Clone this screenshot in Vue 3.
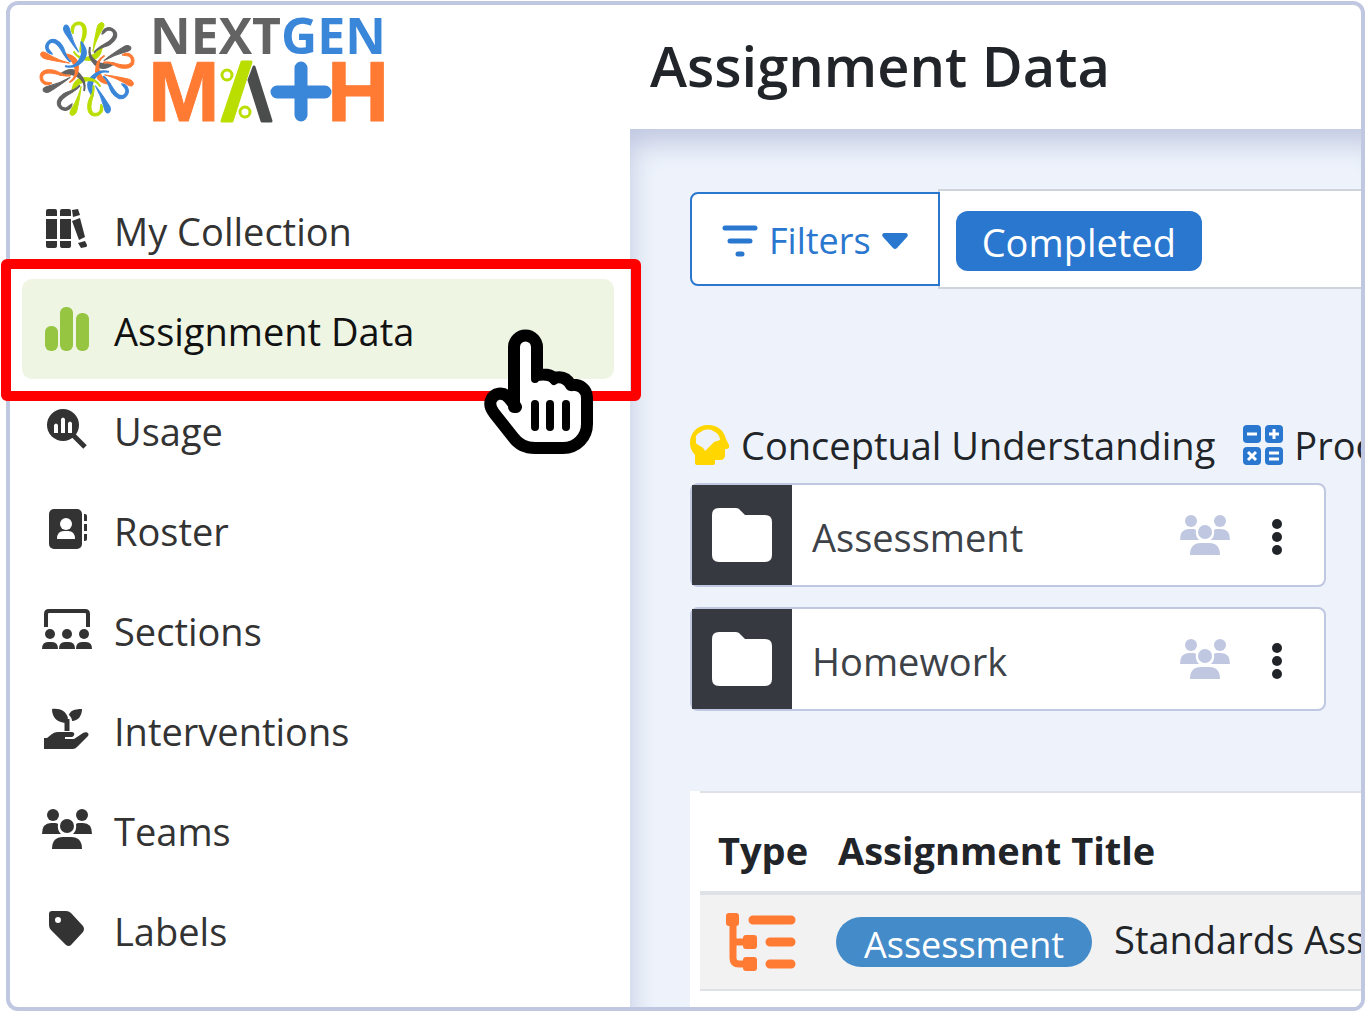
<template>
  <div class="frame">
    <aside class="sidebar">
      <a class="logo" href="#" aria-label="NextGen Math">
        <svg width="352" height="112" viewBox="0 0 352 112" aria-hidden="true">
          <g transform="translate(51 54)">
            <g
              v-for="arm in arms"
              :key="arm.angle"
              :transform="`rotate(${arm.angle})`"
              :fill="arm.color"
              :stroke="arm.color"
              stroke-linecap="round"
              stroke-linejoin="round"
            >
              <path d="M-13 -17C-8 -9 6 -8 15 -23C14 -15 10 -9 2 -9C-5 -9 -10 -12 -13 -17Z" stroke-width="2" />
              <path d="M-7 -17C-8 -24 -4 -31 -4 -38C-4 -44 -8 -46 -12 -43C-14 -41 -13 -37 -14 -35C-18 -40 -15 -47 -8 -47C-1 -47 0 -40 -1 -34C-2 -28 -7 -24 -6 -17Z" stroke-width="1" />
              <path d="M6 -18C7 -28 9 -36 10 -41C11 -47 17 -48 17 -44C17 -40 11 -36 6 -18Z" stroke-width="1" />
            </g>
          </g>
          <text class="logo-next" x="114" y="39">NEXT<tspan fill="#3a86d9">GEN</tspan></text>
          <g class="logo-math">
            <text x="112" y="106">M</text>
            <text x="291" y="106">H</text>
          </g>
          <path d="M206 47h9l-19 59h-10z" fill="#bade00" stroke="#bade00" stroke-width="3" stroke-linejoin="round" />
          <g fill="none" stroke="#bade00" stroke-width="3">
            <circle cx="191" cy="60" r="5" />
            <circle cx="209" cy="97" r="5" />
          </g>
          <path d="M218 52L213 65L226 106L235 106Z" fill="#4b4d4d" stroke="#4b4d4d" stroke-width="3" stroke-linejoin="round" />
          <path d="M265 53v47M241 77h48" stroke="#3a86d9" stroke-width="13" stroke-linecap="round" />
        </svg>
      </a>

      <nav class="nav">
        <a
          v-for="item in items"
          :key="item.label"
          href="#"
          class="nav-item"
          :class="{ active: item.active }"
        >
          <svg class="nav-icon" viewBox="0 0 50 50" aria-hidden="true">
            <g v-if="item.icon === 'books'">
              <path d="M6 5h7q2 0 2 2v5H4V7q0-2 2-2zM4 15h11v20H4zM4 37h11v5q0 2-2 2H6q-2 0-2-2z" />
              <path d="M20 5h7q2 0 2 2v5H18V7q0-2 2-2zM18 15h11v20H18zM18 37h11v5q0 2-2 2h-7q-2 0-2-2z" />
              <path d="M30 6l6-1 2 6-7 2zM30 17l8-3 5 19-6 3zM36 39l7-2 2 4q0 2-1 2l-5 1z" />
            </g>
            <g v-else-if="item.icon === 'bars'">
              <rect x="3" y="22" width="13" height="25" rx="6" />
              <rect x="18" y="3" width="13" height="44" rx="6" />
              <rect x="34" y="9" width="13" height="38" rx="6" />
            </g>
            <g v-else-if="item.icon === 'usage'">
              <circle cx="21" cy="21" r="16" />
              <path d="M31 31l12 12" stroke="currentColor" stroke-width="5" />
              <path d="M12 21q2-3 4 0v8h-4zM19 15q2-3 4 0v14h-4zM26 19q2-3 4 0v10h-4z" fill="#fff" />
            </g>
            <g v-else-if="item.icon === 'roster'">
              <rect x="7" y="5" width="33" height="40" rx="5" />
              <path d="M42 10h1q2 0 2 2v5h-3zM42 20h3v7h-3zM42 30h3v5q0 2-2 2h-1z" />
              <circle cx="24" cy="20" r="6" fill="#fff" />
              <path d="M15 35q0-8 7-8h4q7 0 7 8z" fill="#fff" />
            </g>
            <g v-else-if="item.icon === 'sections'">
              <path d="M4 23V10q0-3 3-3h36q3 0 3 3v13" fill="none" stroke="currentColor" stroke-width="4" />
              <g v-for="x in [8, 25, 42]" :key="x" :transform="`translate(${x} 0)`">
                <circle cx="0" cy="30" r="5" />
                <path d="M-8 45q0-7 6-7h4q6 0 6 7z" />
              </g>
            </g>
            <g v-else-if="item.icon === 'plant'">
              <path d="M10 5c8-1 14 2 16 9c-1 2-1 3-1 5c-9 0-15-5-15-14zM27 11c1-4 5-6 13-6c0 7-4 12-10 12c0-2-1-4-3-6z" />
              <path d="M25 15v12" stroke="currentColor" stroke-width="5" />
              <path d="M2 34h3l5-4c3-2 5-2 8-2h12c3 0 3 4 0 5h-7v2h9l9-6c3-2 7 0 5 3L35 43c-2 2-4 2-6 2H2z" />
            </g>
            <use v-else-if="item.icon === 'team'" href="#team" />
            <g v-else>
              <path fill-rule="evenodd" d="M10 7h14q3 0 5 2l12 13q2 3 0 6L29 41q-2 2-5 0L9 26q-2-2-2-5V10q0-3 3-3zM16 13a3 3 0 1 0 0 6a3 3 0 1 0 0-6z" />
            </g>
          </svg>
          <span>{{ item.label }}</span>
          <span v-if="item.active" class="highlight"></span>
          <svg v-if="item.active" class="pointer" viewBox="0 0 112 128" aria-hidden="true">
            <path
              d="M32 79L25 70C19 63 10 65 7 72C5 77 7 81 10 85L29 109C34 116 42 120 51 120H79C93 120 103 109 103 96V70C103 61 96 56 87 57C83 50 77 48 70 50C66 46 60 46 53 47V19A11 11 0 0 0 30 19V79"
              fill="#fff" stroke="#000" stroke-width="12" stroke-linecap="round" stroke-linejoin="round"
            />
            <path d="M51 47v4M68 50l2 3M86 56l2 3" stroke="#000" stroke-width="8" stroke-linecap="round" />
            <path d="M51 76v23M66 76v23M82 76v23" stroke="#000" stroke-width="8" stroke-linecap="round" />
          </svg>
        </a>
      </nav>
    </aside>

    <div class="main">
      <header class="header">
        <h1>Assignment Data</h1>
      </header>

      <main class="content">
        <div class="filter-row">
          <button type="button" class="filter-btn">
            <svg width="36" height="34" viewBox="0 0 36 34" aria-hidden="true">
              <path d="M3 4h30M8 17h20M16 30h4" stroke="currentColor" stroke-width="5" stroke-linecap="round" />
            </svg>
            <span>Filters</span>
            <svg width="26" height="18" viewBox="0 0 26 18" aria-hidden="true">
              <path d="M2 1h22q3 1 1 4L15 16q-2 2-4 0L1 5q-2-3 1-4z" fill="currentColor" />
            </svg>
          </button>
          <div class="filter-box">
            <span class="chip">Completed</span>
          </div>
        </div>

        <div class="legend">
          <span class="legend-item">
            <svg width="40" height="40" viewBox="0 0 40 40" aria-hidden="true">
              <path fill="#ffd600" d="M18 0C28 0 34 6 36 14L39 20Q40 23 37 24H35V30Q35 35 30 35H25V38Q25 40 23 40H7Q5 40 5 38V30C2 27 0 23 0 18C0 8 7 0 18 0Z" />
              <path fill="#eef3fb" d="M6 14C5 11 8 8 11 7C14 4 20 4 23 6C26 7 30 10 30 15L24 17L15 26C13 21 8 21 6 18Z" />
            </svg>
            Conceptual Understanding
          </span>
          <span class="legend-item">
            <svg width="40" height="40" viewBox="0 0 40 40" aria-hidden="true">
              <g fill="#2a77cf">
                <rect width="18" height="18" rx="4" />
                <rect x="22" width="18" height="18" rx="4" />
                <rect y="22" width="18" height="18" rx="4" />
                <rect x="22" y="22" width="18" height="18" rx="4" />
              </g>
              <path d="M4 9h10M26 9h10M31 4v10M5 27l8 8M13 27l-8 8M26 28h10M26 34h10" stroke="#fff" stroke-width="3" />
            </svg>
            Procedural
          </span>
        </div>

        <div class="folders">
          <div v-for="folder in folders" :key="folder" class="folder">
            <span class="folder-tile">
              <svg width="60" height="56" viewBox="0 0 60 56" aria-hidden="true">
                <path d="M7 1H24Q27 1 29 4L33 8H53Q60 8 60 15V48Q60 55 53 55H7Q0 55 0 48V8Q0 1 7 1Z" fill="#fff" />
              </svg>
            </span>
            <span class="folder-name">{{ folder }}</span>
            <svg class="folder-team" viewBox="0 0 50 50" aria-hidden="true">
              <use href="#team" />
            </svg>
            <button type="button" class="more" :aria-label="`${folder} options`">
              <svg width="10" height="36" viewBox="0 0 10 36" aria-hidden="true">
                <circle cx="5" cy="5" r="5" />
                <circle cx="5" cy="18" r="5" />
                <circle cx="5" cy="31" r="5" />
              </svg>
            </button>
          </div>
        </div>

        <div class="table-wrap">
          <table>
            <thead>
              <tr>
                <th class="col-type">Type</th>
                <th>Assignment Title</th>
              </tr>
            </thead>
            <tbody>
              <tr>
                <td class="col-type">
                  <svg class="tree" viewBox="0 0 70 58" aria-label="Standards">
                    <g fill="#ff7a33">
                      <rect width="13" height="13" rx="3" />
                      <rect x="17" y="22" width="14" height="14" rx="3" />
                      <rect x="17" y="44" width="14" height="14" rx="3" />
                    </g>
                    <path d="M7 8V45Q7 51 13 51H22M7 29H22" fill="none" stroke="#ff7a33" stroke-width="7" />
                    <path d="M27 7H65M44 29H65M44 51H65" stroke="#ff7a33" stroke-width="9" stroke-linecap="round" />
                  </svg>
                </td>
                <td>
                  <div class="title-cell">
                    <span class="badge">Assessment</span>
                    <span>Standards Assessment</span>
                  </div>
                </td>
              </tr>
            </tbody>
          </table>
        </div>
      </main>
    </div>

    <svg class="symbols" aria-hidden="true">
      <symbol id="team" viewBox="0 0 50 50">
        <circle cx="11" cy="11" r="6" />
        <circle cx="40" cy="11" r="6" />
        <circle cx="25" cy="22" r="7" />
        <path d="M0 30q0-11 9-11h4q2 0 3 1q-1 6 3 10zM50 30q0-11-9-11h-4q-2 0-3 1q1 6-3 10zM10 45q0-12 11-12h8q11 0 11 12z" />
      </symbol>
    </svg>
  </div>
</template>

<script setup>
const palette = ['#bade00', '#636363', '#ff7a33', '#3a86d9']

const arms = Array.from({ length: 8 }, (_, i) => ({
  angle: i * 45,
  color: palette[i % 4]
}))

const items = [
  { label: 'My Collection', icon: 'books' },
  { label: 'Assignment Data', icon: 'bars', active: true },
  { label: 'Usage', icon: 'usage' },
  { label: 'Roster', icon: 'roster' },
  { label: 'Sections', icon: 'sections' },
  { label: 'Interventions', icon: 'plant' },
  { label: 'Teams', icon: 'team' },
  { label: 'Labels', icon: 'tag' }
]

const folders = ['Assessment', 'Homework']
</script>

<style>
body {
  margin: 0;
  background: #fff;
}
</style>

<style scoped>
.frame {
  display: flex;
  box-sizing: border-box;
  min-height: calc(100vh - 2px);
  margin: 1px 1px 0 6px;
  border: 4px solid #bfc7e1;
  border-radius: 12px;
  background: #fff;
  font-family: 'Open Sans', 'Noto Sans', sans-serif;
  font-size: 38px;
  line-height: 50px;
  color: #212529;
}

.frame * {
  box-sizing: border-box;
}

.sidebar {
  position: relative;
  z-index: 2;
  flex: 0 0 620px;
  padding: 10px 16px 16px 12px;
}

.logo {
  display: block;
  height: 164px;
  padding-left: 14px;
}

.logo-next {
  font-size: 50px;
  font-weight: 700;
  fill: #636363;
}

.logo-math {
  font-family: 'Liberation Sans', sans-serif;
  font-size: 86px;
  font-weight: 700;
  fill: #ff7a33;
  stroke: #ff7a33;
  stroke-width: 1px;
  stroke-linejoin: round;
}

.nav-item {
  position: relative;
  display: flex;
  align-items: center;
  gap: 22px;
  height: 100px;
  padding: 4px 20px 0;
  border-radius: 10px;
  color: #333;
  text-decoration: none;
}

.nav-item.active {
  z-index: 1;
  background: #eef5e3;
  color: #111;
}

.nav-icon {
  width: 50px;
  height: 50px;
  margin-bottom: 4px;
  fill: currentColor;
}

.active .nav-icon {
  color: #95c541;
}

.highlight {
  position: absolute;
  inset: -20px -27px -22px -21px;
  border: 10px solid #f00;
  border-radius: 6px;
}

.pointer {
  position: absolute;
  top: 49px;
  right: 18px;
  width: 112px;
  height: 128px;
}

.main {
  display: flex;
  flex: 1;
  flex-direction: column;
  min-width: 0;
  overflow: hidden;
  border-radius: 0 8px 8px 0;
}

.header {
  height: 124px;
  padding: 20px;
}

h1 {
  margin: 0;
  font-size: 56px;
  font-weight: 600;
  line-height: 80px;
  white-space: nowrap;
}

.content {
  flex: 1;
  padding: 60px 0 0 60px;
  background: #eef3fb;
  box-shadow: inset 12px 26px 28px -12px #bfc7e1;
}

.filter-row {
  display: flex;
  align-items: center;
}

.filter-btn {
  position: relative;
  z-index: 1;
  display: flex;
  align-items: center;
  gap: 11px;
  height: 94px;
  margin-right: -2px;
  padding: 4px 30px 0;
  border: 2px solid #2a77cf;
  border-radius: 8px 0 0 8px;
  background: #fff;
  color: #2a77cf;
  font: inherit;
  font-size: 36px;
}

.filter-box {
  flex: 1;
  height: 100px;
  padding: 20px 16px;
  border: 2px solid #ced4da;
  border-right: 0;
  background: #fff;
}

.chip {
  display: inline-block;
  height: 60px;
  padding: 0 26px;
  border-radius: 12px;
  background: #2a77cf;
  color: #fff;
  line-height: 62px;
}

.legend {
  display: flex;
  gap: 28px;
  margin-top: 131px;
  white-space: nowrap;
}

.legend-item {
  display: flex;
  align-items: center;
  gap: 11px;
}

.folders {
  display: grid;
  gap: 20px;
  margin: 13px 35px 80px 0;
}

.folder {
  display: flex;
  align-items: center;
  height: 104px;
  padding-right: 32px;
  border: 2px solid #bfc7e1;
  border-radius: 8px;
  background: #fff;
}

.folder-tile {
  display: flex;
  align-items: center;
  justify-content: center;
  width: 100px;
  height: 100px;
  background: #363940;
}

.folder-name {
  flex: 1;
  padding: 4px 20px 0;
  color: #3d4248;
}

.folder-team {
  width: 50px;
  height: 50px;
  fill: #bfc7e1;
}

.more {
  margin-left: 32px;
  padding: 4px 10px 0;
  border: 0;
  background: none;
  line-height: 0;
  fill: #212529;
}

.table-wrap {
  padding: 0 0 16px 10px;
  background: #fff;
}

table {
  width: 100%;
  border-collapse: collapse;
  table-layout: fixed;
  white-space: nowrap;
}

th {
  height: 101px;
  padding: 16px 0 0 2px;
  border-top: 2px solid #dee2e6;
  border-bottom: 4px solid #dee2e6;
  font-weight: 700;
  text-align: left;
}

td {
  height: 97px;
  padding: 0;
  border-bottom: 2px solid #dee2e6;
  background: #f2f2f2;
}

.col-type {
  width: 136px;
  padding-left: 18px;
}

.tree {
  display: block;
  width: 70px;
  height: 58px;
  margin-left: 8px;
}

.title-cell {
  display: flex;
  gap: 22px;
  line-height: 44px;
}

.badge {
  height: 50px;
  padding: 0 28px;
  border-radius: 25px;
  background: #448bca;
  color: #fff;
  font-size: 36px;
  line-height: 56px;
}

.symbols {
  position: absolute;
  width: 0;
  height: 0;
}
</style>
